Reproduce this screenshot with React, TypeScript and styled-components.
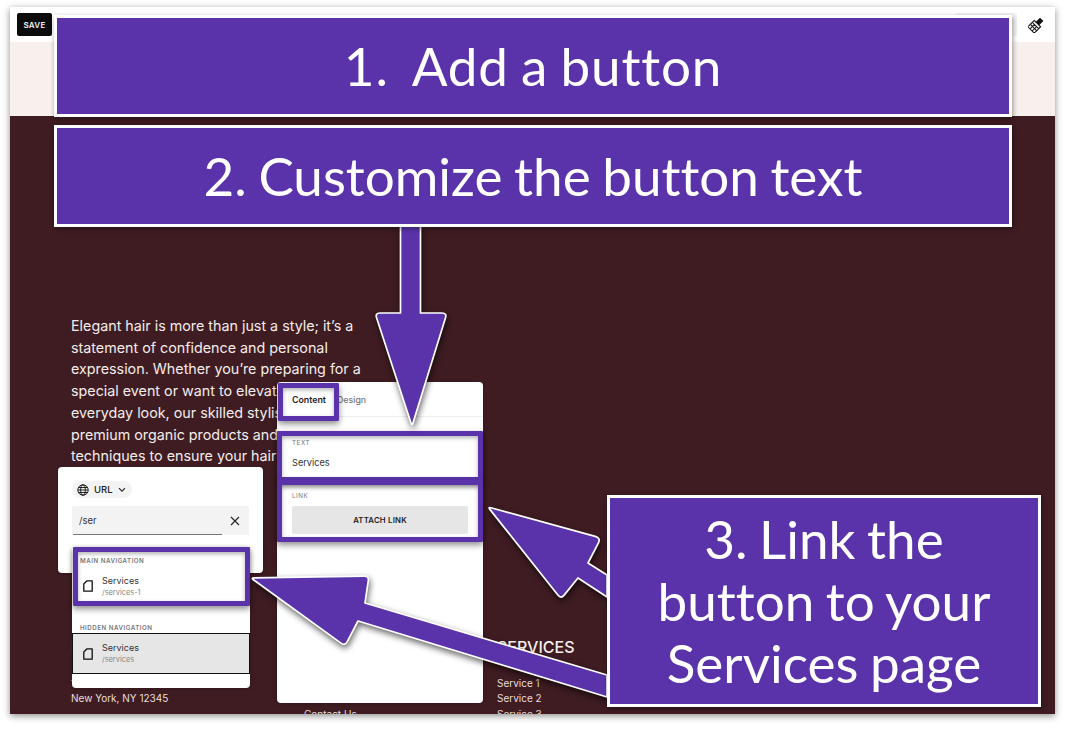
import React from "react";
import styled, { createGlobalStyle } from "styled-components";

const PURPLE = "#5a33ab";
const SHADOW = "0 3px 6px rgba(0,0,0,0.45)";

const Global = createGlobalStyle`
  html, body {
    margin: 0;
    padding: 0;
    background: #fff;
  }
  * {
    box-sizing: border-box;
  }
`;

const Page = styled.div`
  position: relative;
  width: 1065px;
  height: 749px;
  overflow: hidden;
  padding: 7px 10px 35px;
  font-family: Inter, "Liberation Sans", sans-serif;
`;

const Shot = styled.div`
  height: 100%;
  display: flex;
  flex-flow: nowrap column;
  overflow: hidden;
  box-shadow: 0 2px 7px rgba(0, 0, 0, 0.45);
`;

const Toolbar = styled.div`
  height: 35px;
  flex-shrink: 0;
  display: flex;
  align-items: center;
  justify-content: space-between;
  padding: 0 7px;
  background: #fff;
`;

const SaveButton = styled.button`
  width: 35px;
  height: 23px;
  border: 0;
  border-radius: 2px;
  padding: 0;
  background: #0c0c0c;
  color: #f2f2f2;
  font: 600 8px Inter, sans-serif;
  letter-spacing: 0.3px;
`;

const ToolbarRight = styled.div`
  display: flex;
  align-items: center;
  gap: 11px;
  margin-right: 4px;
`;

const GhostButton = styled.div`
  width: 62px;
  height: 23px;
  border-radius: 2px;
  background: #f3f3f3;
`;

const Band = styled.div`
  height: 74px;
  flex-shrink: 0;
  background: #f8f0ed;
`;

const Hero = styled.section`
  flex: 1;
  min-height: 0;
  background: #3e1c22;
  color: #f4ecea;
  padding: 199px 0 0 61px;
`;

const Copy = styled.p`
  margin: 0;
  width: 300px;
  height: 152px;
  font-size: 14.3px;
  line-height: 21.7px;
`;

const Footer = styled.div`
  display: grid;
  grid-template-columns: 233px 193px 200px;
  margin-top: 169px;
`;

const FooterColumn = styled.div`
  font-size: 10px;
  line-height: 15.7px;
  color: #e9dedd;
`;

const FooterTitle = styled.h4`
  margin: 0 0 16.5px;
  height: 23px;
  font-size: 16px;
  line-height: 23px;
  font-weight: 500;
  color: #f7f0ee;
`;

const FooterLine = styled.div``;

const Panel = styled.div`
  position: absolute;
  background: #fff;
  border-radius: 4px;
  box-shadow: 0 1px 4px rgba(0, 0, 0, 0.2);
`;

const LinkPanel = styled(Panel)`
  left: 58px;
  top: 467px;
  width: 205px;
  height: 106px;
  padding: 14px 14px 0;
`;

const UrlPill = styled.div`
  display: flex;
  width: fit-content;
  align-items: center;
  gap: 5px;
  height: 17px;
  padding: 0 6px 0 5px;
  border-radius: 9px;
  background: #f3f3f3;
  font-size: 9.5px;
  font-weight: 500;
  color: #222;
`;

const SearchField = styled.div`
  display: flex;
  align-items: center;
  justify-content: space-between;
  position: relative;
  margin-top: 8px;
  height: 29px;
  padding: 0 9px 0 7px;
  background: #f3f3f3;
  border-radius: 2px 2px 0 0;
  font-size: 9.5px;
  color: #333;

  &::after {
    content: "";
    position: absolute;
    left: 1px;
    bottom: 0;
    width: 149px;
    height: 1px;
    background: #777;
  }
`;

const NavPanel = styled(Panel)`
  left: 72px;
  top: 547px;
  width: 178px;
  height: 141px;
  padding-top: 10px;
`;

const NavLabel = styled.div`
  padding-left: 8px;
  font-size: 6.2px;
  font-weight: 600;
  letter-spacing: 0.5px;
  color: #777;
  line-height: 8px;
`;

const NavRow = styled.div<{ $selected?: boolean }>`
  display: flex;
  align-items: center;
  gap: 9px;
  height: ${(p) => (p.$selected ? "41px" : "32px")};
  padding-left: ${(p) => (p.$selected ? "10px" : "11px")};
  background: ${(p) => (p.$selected ? "#e6e6e6" : "#fff")};
  border: ${(p) => (p.$selected ? "1px solid #111" : "none")};
  margin: ${(p) => (p.$selected ? "1px 0 0" : "5px 0 22px")};
`;

const NavText = styled.div`
  display: flex;
  flex-flow: nowrap column;
  gap: 1px;
`;

const NavName = styled.span`
  font-size: 9px;
  line-height: 12px;
  color: #333;
`;

const NavPath = styled.span`
  font-size: 7.4px;
  line-height: 10px;
  color: #888;
`;

const DesignPanel = styled(Panel)`
  left: 277px;
  top: 382px;
  width: 206px;
  height: 321px;
`;

const Tabs = styled.div`
  display: flex;
  gap: 11px;
  height: 35px;
  padding: 12px 15px 0;
  border-bottom: 1px solid #eee;
  font-size: 8.8px;
`;

const Tab = styled.span<{ $active?: boolean }>`
  color: ${(p) => (p.$active ? "#222" : "#777")};
  font-weight: ${(p) => (p.$active ? 600 : 500)};
`;

const FieldLabel = styled.div`
  height: 8px;
  font-size: 6.2px;
  line-height: 8px;
  letter-spacing: 0.6px;
  color: #777;
`;

const TextField = styled.div`
  height: 63px;
  padding: 22px 15px 0;
`;

const FieldValue = styled.div`
  margin-top: 10px;
  font-size: 9.2px;
  line-height: 12px;
  color: #333;
`;

const LinkField = styled.div`
  padding: 12px 15px 0;
`;

const AttachButton = styled.div`
  display: flex;
  align-items: center;
  justify-content: center;
  margin-top: 6px;
  height: 28px;
  border-radius: 2px;
  background: #e6e6e6;
  font-size: 7.8px;
  font-weight: 600;
  letter-spacing: 0.2px;
  color: #222;
`;

const Highlight = styled.div<{ $l: number; $t: number; $w: number; $h: number }>`
  position: absolute;
  left: ${(p) => p.$l}px;
  top: ${(p) => p.$t}px;
  width: ${(p) => p.$w}px;
  height: ${(p) => p.$h}px;
  border: 5px solid ${PURPLE};
  border-radius: 1px;
  box-shadow: ${SHADOW}, inset 0 2px 4px rgba(0, 0, 0, 0.3);
`;

const ArrowLayer = styled.svg`
  position: absolute;
  left: 0;
  top: 0;
  width: 1065px;
  height: 749px;
  filter: drop-shadow(1px 3px 3px rgba(0, 0, 0, 0.6));
`;

const Callout = styled.div<{ $l: number; $t: number; $w: number; $h: number; $tracking?: number }>`
  position: absolute;
  left: ${(p) => p.$l}px;
  top: ${(p) => p.$t}px;
  width: ${(p) => p.$w}px;
  height: ${(p) => p.$h}px;
  display: flex;
  align-items: center;
  justify-content: center;
  text-align: center;
  white-space: pre;
  background: ${PURPLE};
  border: 3px solid #fff;
  box-shadow: 1px 2px 5px rgba(0, 0, 0, 0.4);
  color: #fff;
  font-family: Lato, sans-serif;
  font-size: 53px;
  font-variant-ligatures: none;
  line-height: 62px;
  word-spacing: -2px;
  letter-spacing: ${(p) => p.$tracking ?? 0}px;
`;

const Brush = () => (
  <svg width="16" height="16" viewBox="0 0 16 16" fill="none" stroke="#111" strokeWidth="1.1">
    <g transform="rotate(45 8 8)">
      <rect x="6.2" y="0.5" width="3.6" height="5.5" fill="#111" />
      <rect x="3.5" y="6" width="9" height="5.5" fill="#fff" />
      <path d="M3.5 8.7h9M6.5 8.7v2.8M9.5 8.7v2.8M3.5 11.5v3.5M6.5 11.5v3.5M9.5 11.5v3.5M12.5 11.5v3.5M3.5 15h9" strokeWidth="1" />
    </g>
  </svg>
);

const Globe = () => (
  <svg width="12" height="12" viewBox="0 0 12 12" fill="none" stroke="#111" strokeWidth="0.9">
    <circle cx="6" cy="6" r="5.2" />
    <ellipse cx="6" cy="6" rx="2.3" ry="5.2" />
    <path d="M.8 6h10.4M1.5 3.5h9M1.5 8.5h9" />
  </svg>
);

const Chevron = () => (
  <svg width="8" height="6" viewBox="0 0 8 6" fill="none" stroke="#222" strokeWidth="1.1">
    <path d="M1 1.2 4 4.2 7 1.2" />
  </svg>
);

const Close = () => (
  <svg width="10" height="10" viewBox="0 0 10 10" fill="none" stroke="#222" strokeWidth="1.1">
    <path d="M1 1 9 9M9 1 1 9" />
  </svg>
);

const PageIcon = () => (
  <svg width="10" height="12" viewBox="0 0 10 12" fill="none" stroke="#111" strokeWidth="1.3" strokeLinejoin="round">
    <path d="M4 .8h5.2v10.4H.8V4Z" />
  </svg>
);

type Corner = [number, number, number];

// polygon outline with a rounded corner of the given radius on each point
const roundedPath = (corners: Corner[]) => {
  const n = corners.length;
  let d = "";
  corners.forEach(([x, y, r], i) => {
    const [px, py] = corners[(i + n - 1) % n];
    const [nx, ny] = corners[(i + 1) % n];
    const toPrev = Math.hypot(px - x, py - y);
    const toNext = Math.hypot(nx - x, ny - y);
    const ax = x + ((px - x) / toPrev) * r;
    const ay = y + ((py - y) / toPrev) * r;
    const bx = x + ((nx - x) / toNext) * r;
    const by = y + ((ny - y) / toNext) * r;
    d += `${i === 0 ? "M" : "L"}${ax} ${ay}Q${x} ${y} ${bx} ${by}`;
  });
  return d + "Z";
};

const arrows: Corner[][] = [
  [
    [400.5, 226, 0],
    [420.5, 226, 0],
    [420.5, 313, 0],
    [447, 313, 5],
    [412, 426, 3],
    [375, 313, 5],
    [400.5, 313, 0],
  ],
  [
    [488, 507, 3],
    [601, 538, 6],
    [588, 563, 0],
    [607, 575, 0],
    [607, 597, 0],
    [578, 578, 0],
    [561, 599, 5],
  ],
  [
    [251, 578, 3],
    [369, 576, 5],
    [365, 603, 0],
    [607, 675, 0],
    [607, 697, 0],
    [358, 621, 0],
    [345, 646, 5],
  ],
];

const App: React.FC = () => {
  return (
    <Page>
      <Global />
      <Shot>
        <Toolbar>
          <SaveButton>SAVE</SaveButton>
          <ToolbarRight>
            <GhostButton />
            <Brush />
          </ToolbarRight>
        </Toolbar>
        <Band />
        <Hero>
          <Copy>
            Elegant hair is more than just a style; it’s a statement of confidence and personal expression. Whether
            you’re preparing for a special event or want to elevate your everyday look, our skilled stylists use premium
            organic products and
            <br />
            techniques to ensure your hair
          </Copy>
          <Footer>
            <FooterColumn>
              <FooterTitle>LOCATION</FooterTitle>
              <FooterLine>123 Main Street</FooterLine>
              <FooterLine>New York, NY 12345</FooterLine>
            </FooterColumn>
            <FooterColumn>
              <FooterTitle>LINKS</FooterTitle>
              <FooterLine>Home</FooterLine>
              <FooterLine>About Us</FooterLine>
              <FooterLine>Contact Us</FooterLine>
            </FooterColumn>
            <FooterColumn>
              <FooterTitle>SERVICES</FooterTitle>
              <FooterLine>Service 1</FooterLine>
              <FooterLine>Service 2</FooterLine>
              <FooterLine>Service 3</FooterLine>
            </FooterColumn>
          </Footer>
        </Hero>
      </Shot>

      <LinkPanel>
        <UrlPill>
          <Globe />
          URL
          <Chevron />
        </UrlPill>
        <SearchField>
          /ser
          <Close />
        </SearchField>
      </LinkPanel>

      <NavPanel>
        <NavLabel>MAIN NAVIGATION</NavLabel>
        <NavRow>
          <PageIcon />
          <NavText>
            <NavName>Services</NavName>
            <NavPath>/services-1</NavPath>
          </NavText>
        </NavRow>
        <NavLabel>HIDDEN NAVIGATION</NavLabel>
        <NavRow $selected>
          <PageIcon />
          <NavText>
            <NavName>Services</NavName>
            <NavPath>/services</NavPath>
          </NavText>
        </NavRow>
      </NavPanel>

      <DesignPanel>
        <Tabs>
          <Tab $active>Content</Tab>
          <Tab>Design</Tab>
        </Tabs>
        <TextField>
          <FieldLabel>TEXT</FieldLabel>
          <FieldValue>Services</FieldValue>
        </TextField>
        <LinkField>
          <FieldLabel>LINK</FieldLabel>
          <AttachButton>ATTACH LINK</AttachButton>
        </LinkField>
      </DesignPanel>

      <Highlight $l={278} $t={383} $w={61} $h={38} />
      <Highlight $l={277} $t={431} $w={206} $h={51} />
      <Highlight $l={277} $t={480} $w={206} $h={62} />
      <Highlight $l={73} $t={547} $w={177} $h={59} />

      <ArrowLayer viewBox="0 0 1065 749">
        {arrows.map((corners) => (
          <path
            key={corners[0].join()}
            d={roundedPath(corners)}
            fill={PURPLE}
            stroke="#fff"
            strokeWidth="1.7"
            strokeLinejoin="round"
          />
        ))}
      </ArrowLayer>

      <Callout $l={54} $t={15} $w={958} $h={102} $tracking={0.8}>
        {"1.  Add a button"}
      </Callout>
      <Callout $l={54} $t={125} $w={958} $h={102}>
        2. Customize the button text
      </Callout>
      <Callout $l={607} $t={495} $w={434} $h={212}>
        {"3. Link the\nbutton to your\nServices page"}
      </Callout>
    </Page>
  );
};

export default App;
